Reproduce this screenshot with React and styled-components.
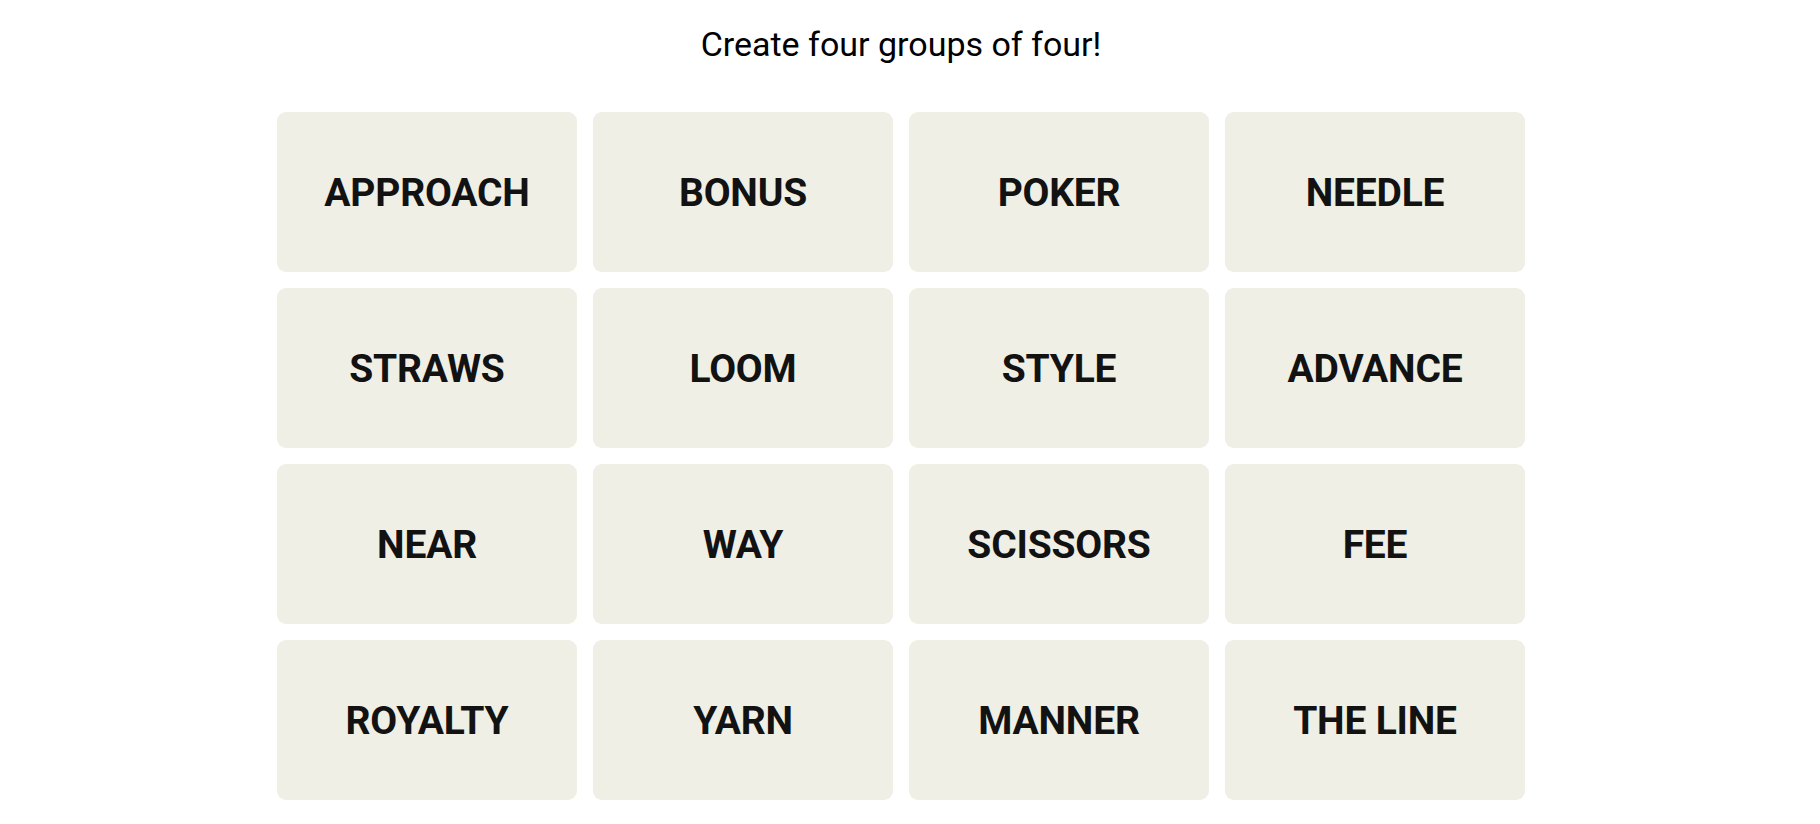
import React from 'react';
import styled, { createGlobalStyle } from 'styled-components';

const GlobalStyle = createGlobalStyle`
  body {
    margin: 0;
    background: #ffffff;
    font-family: Roboto, "Liberation Sans", Arial, sans-serif;
    color: #000000;
  }
`;

const Page = styled.main`
  display: flex;
  flex-direction: column;
  align-items: center;
  padding: 24px 18px 0 0;
`;

const Title = styled.h2`
  margin: 0 0 48px;
  font-size: 34px;
  font-weight: 400;
  line-height: 40px;
  color: #000000;
`;

const Board = styled.section`
  display: grid;
  grid-template-columns: repeat(4, 300px);
  grid-auto-rows: 160px;
  gap: 16px;
`;

const Tile = styled.button`
  display: flex;
  align-items: center;
  justify-content: center;
  border: none;
  border-radius: 9px;
  background: #efefe6;
  color: #121212;
  font-family: Roboto, "Liberation Sans", Arial, sans-serif;
  font-size: 39px;
  font-weight: 700;
  letter-spacing: -0.2px;
  text-transform: uppercase;
  cursor: pointer;
  padding: 1px 0 0;
`;

const words = [
  'APPROACH', 'BONUS', 'POKER', 'NEEDLE',
  'STRAWS', 'LOOM', 'STYLE', 'ADVANCE',
  'NEAR', 'WAY', 'SCISSORS', 'FEE',
  'ROYALTY', 'YARN', 'MANNER', 'THE LINE',
];

const App = () => {
  return (
    <>
      <GlobalStyle />
      <Page>
        <Title>Create four groups of four!</Title>
        <Board>
          {words.map((word) => (
            <Tile key={word}>{word}</Tile>
          ))}
        </Board>
      </Page>
    </>
  );
};

export default App;
